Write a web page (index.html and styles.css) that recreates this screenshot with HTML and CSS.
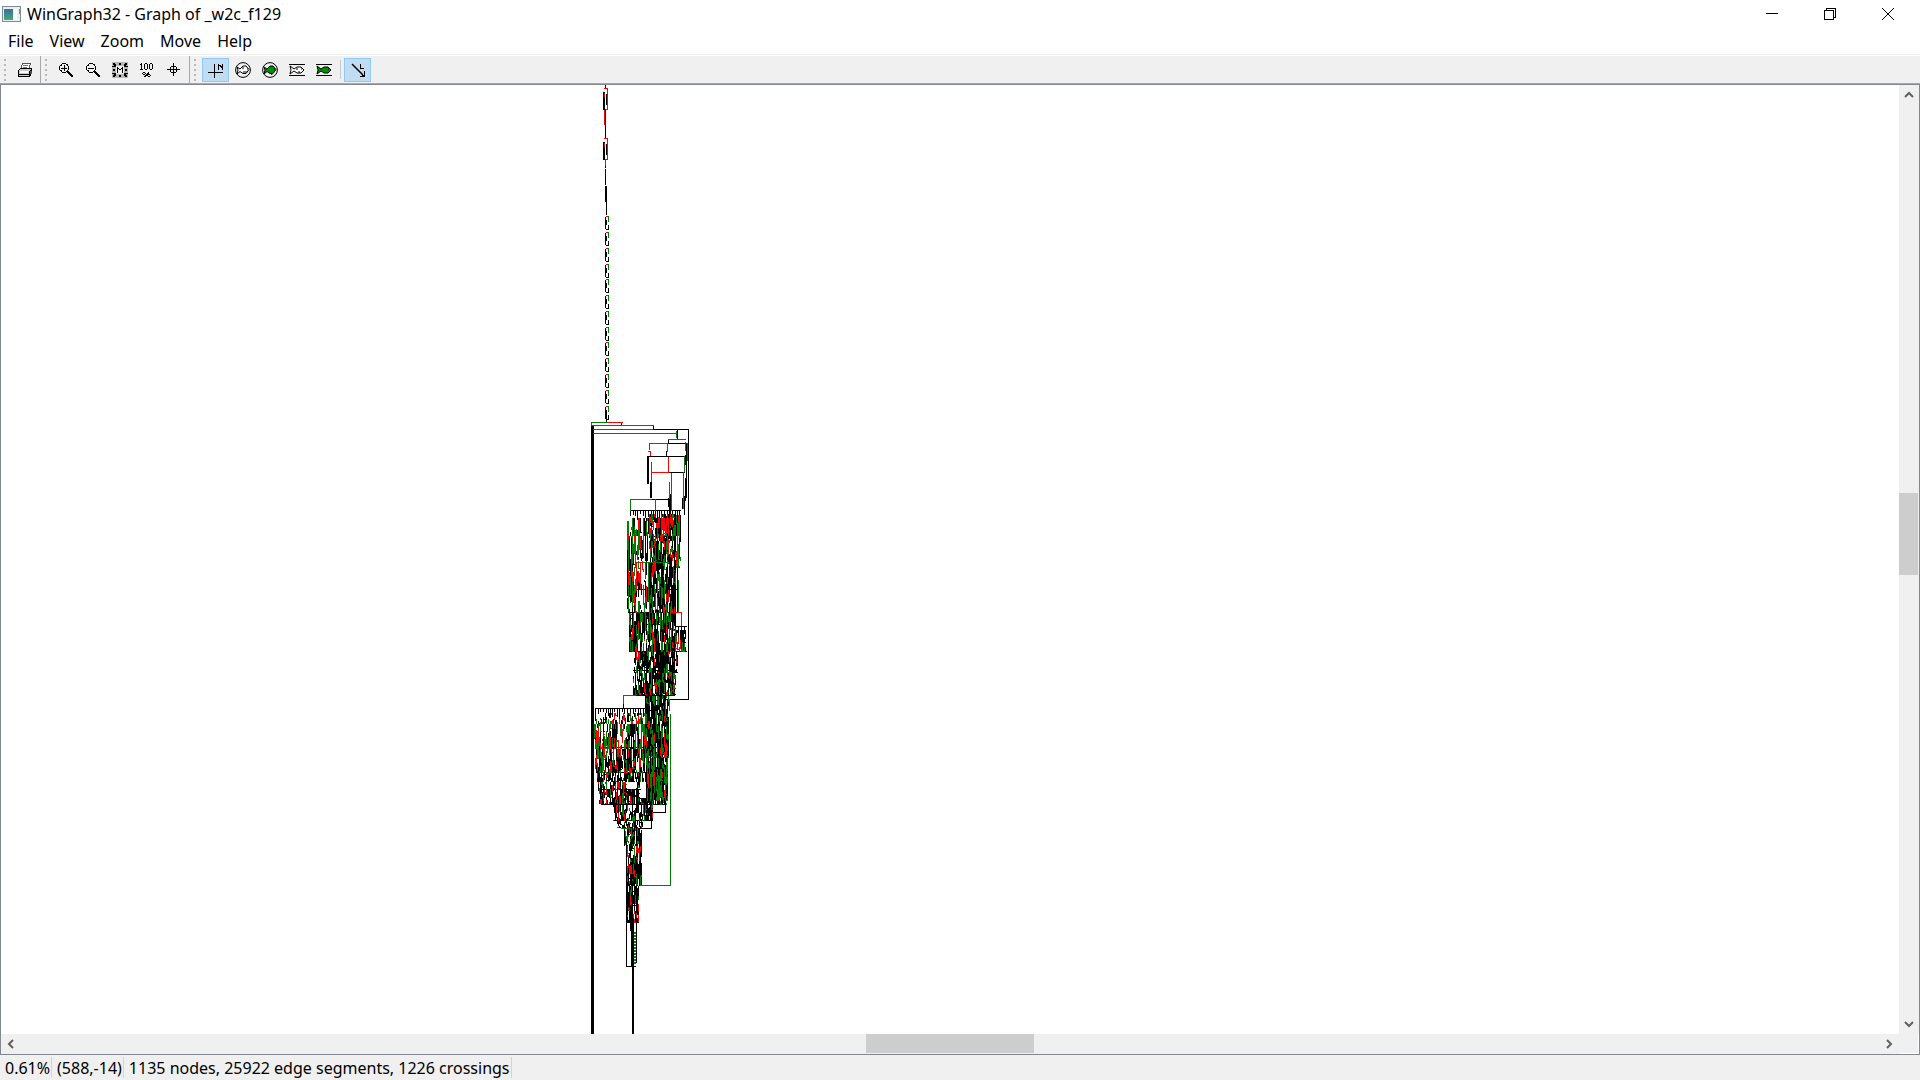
FILE: index.html
```html
<!DOCTYPE html>
<html lang="en">
<head>
<meta charset="utf-8">
<title>WinGraph32 - Graph of _w2c_f129</title>
<link rel="stylesheet" href="styles.css">
</head>
<body>
<div class="window">
  <header class="titlebar">
    <svg class="app-icon" width="19" height="16" viewBox="0 0 19 16" shape-rendering="crispEdges"><defs><linearGradient id="pane" x2="0" y2="1"><stop offset="0" stop-color="#3a6ea0"/><stop offset="1" stop-color="#48a878"/></linearGradient></defs><path fill="#7c8a92" d="M0 0h19v16H0z"/><path fill="#e9eef0" d="M1 1h17v14H1z"/><path fill="url(#pane)" d="M2 3h9v11H2z"/><path fill="#fff" d="M12 3h3v11h-3z"/><path fill="#50a090" d="M17 3h1v5h-1z"/></svg>
    <h1 class="title">WinGraph32 - Graph of _w2c_f129</h1>
    <div class="window-buttons">
      <button class="window-button" aria-label="Minimize"><svg width="12" height="12" shape-rendering="crispEdges"><path d="M0 5h12v1H0z"/></svg></button>
      <button class="window-button" aria-label="Restore"><svg width="12" height="12" fill="none" stroke="#000" shape-rendering="crispEdges"><path d="M.5 2.500h9v9h-9zM2.500 2V.5h9v9H10"/></svg></button>
      <button class="window-button" aria-label="Close"><svg width="12" height="12" stroke="#000"><path d="M0 0l12 12M12 0L0 12"/></svg></button>
    </div>
  </header>
  <nav class="menubar">
    <button class="menu">File</button><button class="menu">View</button><button class="menu">Zoom</button><button class="menu">Move</button><button class="menu">Help</button>
  </nav>
  <div class="toolbar">
    <div class="tool-group">
      <span class="grip"></span>
      <button class="tool" aria-label="Print"><svg width="16" height="16" shape-rendering="crispEdges"><path fill="#fff" stroke="#555" d="M5.500 1.500h8l-2 6h-8z"/><path stroke="#777" d="M6 3.500h5M6 5.500h4"/><path fill="#ccc" stroke="#000" d="M1.500 8.500l2-2h11v5l-2 3h-11z"/><path stroke="#000" d="M2 12.500h10M12.500 9v5M13 9.500l2-2"/><path stroke="#fff" d="M3 9.500h9M3 10.500h8"/><path fill="#555" d="M13 9h2v3h-2z"/></svg></button>
    </div>
    <div class="tool-group">
      <span class="grip"></span>
      <button class="tool" aria-label="Zoom in"><svg width="16" height="16" fill="none" stroke="#000" shape-rendering="crispEdges"><path d="M4 1.500h4M4 10.500h4M1.500 4v4M10.500 4v4M2 3.500h1v-1h1M8 2.500h1v1h1M2 8.500h1v1h1M8 9.500h1v-1h1M3 6.500h6M6.500 3v6"/><path stroke-width="2" d="M9 9l6 6"/></svg></button>
      <button class="tool" aria-label="Zoom out"><svg width="16" height="16" fill="none" stroke="#000" shape-rendering="crispEdges"><path d="M4 1.500h4M4 10.500h4M1.500 4v4M10.500 4v4M2 3.500h1v-1h1M8 2.500h1v1h1M2 8.500h1v1h1M8 9.500h1v-1h1M3 6.500h6"/><path stroke-width="2" d="M9 9l6 6"/></svg></button>
      <button class="tool" aria-label="Fit window"><svg width="16" height="16" shape-rendering="crispEdges"><path fill="#b8b8b8" d="M0 0h16v16H0z"/><path fill="#f0f0f0" d="M4 4h8v8H4z"/><path d="M4 1v4H0V4h2V3H1V1h2v1h1zM12 1v4h4V4h-2V3h1V1h-2v1h-1zM4 15v-4H0v1h2v1H1v2h2v-1h1zM12 15v-4h4v1h-2v1h1v2h-2v-1h-1zM5 5h1v1h1v1h2V6h1V5h1v6h-1V7H9v1H7V7H6v4H5zM7 1h2v2H7zM7 13h2v2H7zM1 7h2v2H1zM13 7h2v2h-2z"/></svg></button>
      <button class="tool" aria-label="Zoom 100%"><svg width="16" height="16" fill="none" stroke="#000" shape-rendering="crispEdges"><path d="M1 2.500h1M2.500 1v7M1 7.500h3M5.500 2v5M6 1.500h2M8.500 2v5M6 7.500h2M10.500 2v5M11 1.500h2M13.500 2v5M11 7.500h2M4 10.500h2M4 12.500h2M9 12.500h2M9 14.500h2M3.500 11v1M6.500 11v1M8.500 13v1M11.500 13v1M5 14.500h1v-1h1v-1h1v-1h1v-1h1"/></svg></button>
      <button class="tool" aria-label="Center"><svg width="16" height="16" fill="none" stroke="#000" shape-rendering="crispEdges"><path d="M7.500 1v13M1 7.500h13M5 4.500h5M4.500 5v5M10.500 5v5M5 10.500h5"/></svg></button>
    </div>
    <div class="tool-group">
      <span class="grip"></span>
      <button class="tool pressed" aria-label="Orthogonal layout" aria-pressed="true"><svg width="16" height="16" fill="none" stroke="#000" shape-rendering="crispEdges"><path d="M0 10.500h15M6.500 2v14M10.500 2v6M14.500 2v6M11 3.500h1v1h1v1h1v1h1"/></svg></button>
      <button class="tool" aria-label="Circular fisheye"><svg width="16" height="16" fill="none" stroke="#000"><circle cx="8" cy="8" r="7.400"/><path fill="#fff" d="M2 5l3 2 3-3h3l3 3.500-3 4H8L5 9.500 2 12l1-4z"/><path d="M12 7h1M7 6h2M8 10h2M11 9v2"/></svg></button>
      <button class="tool" aria-label="Filled circular fisheye"><svg width="16" height="16" fill="none" stroke="#000"><circle cx="8" cy="8" r="7.400"/><path fill="#009000" d="M2 5l3 2 3-3h3l3 3.500-3 4H8L5 9.500 2 12l1-4z"/><path d="M12 7h1M9 11l1 2"/></svg></button>
      <button class="tool" aria-label="Flat fisheye"><svg width="16" height="16" fill="none" stroke="#000"><path shape-rendering="crispEdges" d="M0 2.500h16M0 13.500h16"/><path fill="#fff" d="M1 4l4 3 3-2h4l3 3-3 3H8L5 9l-4 3 1-4z"/><path d="M12 7h1M7 7h2M9 10h2"/></svg></button>
      <button class="tool" aria-label="Filled flat fisheye"><svg width="16" height="16" fill="none" stroke="#000"><path shape-rendering="crispEdges" d="M0 2.500h16M0 13.500h16"/><path fill="#009000" d="M1 4l4 3 3-2h4l3 3-3 3H8L5 9l-4 3 1-4z"/><path d="M12 7h1"/></svg></button>
      <span class="divider"></span>
      <button class="tool pressed" aria-label="Edge direction" aria-pressed="true"><svg width="16" height="16" fill="none" stroke="#000"><path stroke-width="1.500" d="M2 2l11 11"/><path shape-rendering="crispEdges" d="M14.500 9v5M10 14.500h5M12 13.500h3M10.500 2v5M11 6.500h3"/></svg></button>
    </div>
  </div>
  <main class="view">
    <div class="graph">
      <svg class="drawing" shape-rendering="crispEdges" role="img" aria-label="Control flow graph">
        <g transform="translate(-1 -85)">
          <path id="black" fill="#000"/><path id="green" fill="#008000"/><path id="red" fill="#f00"/>
        </g>
      </svg>
    </div>
    <div class="scroll vertical">
      <button class="arrow" aria-label="Scroll up"><svg width="10" height="8"><path d="M1 6l4-4 4 4"/></svg></button>
      <div class="track"><span class="before"></span><span class="thumb"></span><span class="after"></span></div>
      <button class="arrow" aria-label="Scroll down"><svg width="10" height="8"><path d="M1 2l4 4 4-4"/></svg></button>
    </div>
    <div class="scroll horizontal">
      <button class="arrow" aria-label="Scroll left"><svg width="8" height="10"><path d="M6 1L2 5l4 4"/></svg></button>
      <div class="track"><span class="before"></span><span class="thumb"></span><span class="after"></span></div>
      <button class="arrow" aria-label="Scroll right"><svg width="8" height="10"><path d="M2 1l4 4-4 4"/></svg></button>
    </div>
    <span class="corner"></span>
  </main>
  <footer class="status">
    <span class="cell">0.61%</span><span class="cell">(588,-14)</span><span class="cell">1135 nodes, 25922 edge segments, 1226 crossings</span>
  </footer>
</div>
<script src="graph.js"></script>
</body>
</html>
```
FILE: styles.css
```css
* { box-sizing: border-box; }
body { margin: 0; font: 16px/20px "Noto Sans", "Open Sans", sans-serif; color: #000; background: #fff; }
button { border: 0; padding: 0; margin: 0; background: none; font: inherit; color: inherit; }
svg { display: block; }
.window { display: flex; flex-direction: column; height: 100vh; overflow: hidden; }

.titlebar { display: flex; align-items: center; height: 28px; padding: 0 3px 0 2px; }
.title { flex: 1; margin: 0 0 0 6px; font-size: 16px; font-weight: 400; line-height: 20px; }
.window-buttons { display: flex; }
.window-button { display: flex; align-items: center; justify-content: center; width: 58px; height: 28px; }

.menubar { display: flex; height: 27px; border-bottom: 1px solid #f0f0f0; }
.menu { padding: 0 8px; line-height: 26px; }

.toolbar { display: flex; height: 28px; margin-top: 1px; background: #f0f0f0; border-bottom: 1px solid #a8a8ac; }
.tool-group { display: flex; align-items: center; padding-left: 4px; }
.tool-group + .tool-group { border-left: 1px solid #a8a8a8; }
.grip { width: 2px; height: 22px; margin-right: 5px; background: repeating-linear-gradient(#b8b8b8 0 2px, transparent 2px 5px); }
.tool { display: flex; align-items: center; justify-content: center; width: 27px; height: 24px; }
.tool-group:not(:last-child) .tool:last-child { margin-right: 2px; }
.tool-group:last-child .grip { margin-right: 6px; }
.pressed { background: #c0dcf3; border: 1px solid #90c8f6; }
.divider { width: 1px; height: 19px; margin: 0 3px; background: #c8c8c8; }

.view { position: relative; flex: 1; min-height: 0; display: grid; grid-template: 1fr 20px / 1fr 20px; border: 1px solid #828790; }
.graph { overflow: hidden; min-height: 0; }
.drawing { width: 100%; height: 100%; }
.scroll { display: flex; background: #f0f0f0; }
.vertical { flex-direction: column; padding-right: 1px; }
.horizontal { grid-column: 1; padding-bottom: 1px; }
.arrow { display: flex; align-items: center; justify-content: center; flex: 0 0 20px; }
.arrow path { fill: none; stroke: #606060; stroke-width: 2; }
.track { display: flex; flex: 1; flex-direction: inherit; }
.thumb { background: #cdcdcd; }
.vertical .before { flex: 388; }
.vertical .thumb { flex: 82; }
.vertical .after { flex: 439; }
.horizontal .before { flex: 845; }
.horizontal .thumb { flex: 168; }
.horizontal .after { flex: 845; }
.corner { background: #f0f0f0; border: solid #fff; border-width: 0 1px 1px 0; }

.status { display: flex; height: 25px; padding: 2px 0; background: #f0f0f0; line-height: 22px; }
.cell { padding: 0 1px 0 5px; border-right: 1px solid #d4d4d4; white-space: nowrap; }
```
FILE: graph.js
```js
const out = { k: '', g: '', r: '' };
const box = (c, x, y, w, h) => { out[c] += `M${x} ${y}h${w}v${h}h${-w}z`; };
const hl = (c, x0, x1, y) => box(c, x0, y, x1 - x0 + 1, 1);
const vl = (c, x, y0, y1) => box(c, x, y0, 1, y1 - y0 + 1);

let seed = 129;
const rnd = () => { seed = (seed * 1664525 + 1013904223) % 4294967296; return seed / 4294967296; };

// Columns of short edge segments; mix gives the share of black, green and red.
function band(x0, x1, y0, y1, mix, len = 12) {
  for (let x = x0; x <= x1; x++) {
    let y = y0;
    while (y <= y1) {
      const n = 2 + Math.floor(rnd() * len);
      const end = Math.min(y + n - 1, y1);
      const p = rnd();
      const c = p < mix[0] ? 'k' : p < mix[0] + mix[1] ? 'g' : p < mix[0] + mix[1] + mix[2] ? 'r' : '';
      if (c) {
        vl(c, x, y, end);
        if (rnd() < 0.25 && x < x1) hl(c, x, x + 1, end);
      }
      y = end + 1;
    }
  }
}

// A bus with teeth hanging under it.
function comb(x0, x1, y, depth) {
  hl('k', x0, x1, y);
  for (let x = x0; x <= x1; x += 2 + Math.floor(rnd() * 2)) vl('k', x, y, y + 3 + Math.floor(rnd() * depth));
}

// Upper chain
vl('k', 605, 85, 87);
for (const y of [88, 138]) {
  hl('g', 605, 607, y); vl('g', 607, y, y + 21); hl('g', 605, 607, y + 21);
  hl('r', 604, 606, y); box('k', 603, y + 4, 2, 18); vl('r', 604, y + 5, y + 8); vl('k', 606, y + 6, y + 16);
}
vl('r', 604, 110, 124); vl('k', 605, 110, 138);
vl('k', 605, 160, 167); vl('r', 605, 160, 165);
vl('k', 605, 169, 184); box('k', 605, 186, 2, 16); vl('k', 606, 200, 214);
for (const y of [216, 232, 248, 264, 279, 295, 311, 327, 342, 358, 374, 390, 406]) {
  vl('k', 605, y + 1, y + 12); hl('k', 606, 607, y + 13); vl('k', 608, y + 9, y + 13); vl('k', 606, y + 4, y + 8);
  hl('g', 607, 608, y); vl('g', 608, y, y + 5); hl('r', 606, 607, y);
}
vl('k', 606, 414, 422);

// Outer frame
hl('g', 591, 606, 422); hl('r', 607, 622, 422); vl('g', 591, 422, 425);
vl('k', 621, 423, 425); hl('g', 592, 622, 425); hl('r', 623, 653, 425); vl('k', 653, 425, 429);
hl('r', 593, 652, 429); hl('k', 653, 688, 429); hl('r', 593, 676, 433);
box('k', 591, 426, 3, 608); vl('k', 688, 429, 699); hl('k', 666, 688, 699);

// Branches on the upper right
vl('k', 677, 430, 438); vl('g', 676, 431, 437); hl('r', 668, 677, 439); hl('g', 678, 685, 439); vl('k', 668, 439, 443);
hl('g', 649, 667, 443); hl('k', 668, 687, 443); vl('g', 649, 443, 449); vl('r', 667, 443, 451); vl('k', 666, 451, 456);
hl('r', 648, 650, 451); vl('r', 650, 451, 455); hl('k', 649, 684, 456); vl('r', 668, 457, 471); vl('g', 684, 456, 471);
box('k', 647, 456, 2, 28); vl('g', 651, 462, 473); vl('r', 651, 472, 481); box('k', 650, 482, 2, 16);
hl('r', 652, 668, 472); hl('k', 669, 684, 472); vl('g', 671, 473, 510); vl('r', 669, 482, 498);
vl('k', 686, 443, 497); box('k', 685, 455, 2, 10); vl('r', 685, 442, 450); vl('r', 683, 472, 508); vl('g', 687, 443, 460);
vl('k', 682, 498, 508); vl('k', 684, 496, 514); vl('k', 685, 478, 500);
hl('g', 630, 651, 499); hl('k', 652, 670, 499); vl('g', 630, 499, 510); vl('r', 655, 499, 510); vl('k', 668, 498, 506); box('k', 669, 494, 2, 26);

// First cluster
comb(630, 680, 510, 7);
band(630, 679, 518, 535, [.16, .2, .12], 16);
band(649, 675, 514, 540, [.5, .16, .08], 8);
for (const [x, c, y0, y1] of [[629, 'k', 536, 570], [632, 'g', 520, 552], [635, 'g', 530, 562], [638, 'g', 519, 554], [643, 'g', 519, 555], [642, 'k', 540, 558], [647, 'k', 532, 558], [628, 'g', 521, 611], [631, 'r', 554, 576], [636, 'r', 562, 590], [640, 'r', 562, 588], [645, 'r', 562, 578], [643, 'r', 585, 604], [648, 'g', 562, 600]]) vl(c, x, y0, y1);
band(629, 635, 536, 612, [.34, .18, .14], 14);
band(636, 648, 536, 560, [.22, .12, .06], 16);
band(627, 628, 521, 612, [.4, .24, .14], 16);
band(636, 648, 561, 612, [.16, .08, .08], 14);
band(649, 675, 541, 612, [.52, .18, .13], 12);
band(676, 680, 515, 567, [.3, .18, .25], 15);
hl('k', 649, 675, 536); hl('g', 636, 668, 562); hl('k', 646, 676, 589); hl('k', 627, 648, 589);
vl('k', 677, 568, 612); vl('g', 678, 580, 612); hl('r', 675, 681, 612); vl('r', 681, 612, 625);
band(629, 675, 613, 651, [.52, .24, .09], 12);
hl('k', 629, 648, 612);
comb(675, 686, 626, 7);
band(675, 685, 630, 651, [.5, .15, .08], 8);
box('k', 629, 622, 2, 30); hl('k', 629, 686, 651);
band(634, 677, 652, 672, [.6, .17, .07], 8);
band(633, 675, 673, 694, [.52, .2, .1], 8);
hl('k', 633, 676, 670); hl('k', 634, 674, 695);
box('k', 658, 650, 8, 44);

// Link to the second cluster
hl('r', 623, 635, 695); vl('r', 623, 695, 703); vl('k', 623, 704, 708);
vl('k', 645, 695, 708); box('k', 646, 700, 4, 10);
band(645, 668, 696, 757, [.62, .22, .07], 10);
vl('g', 670, 714, 885); hl('g', 640, 670, 885); vl('r', 669, 699, 710);

// Second cluster
comb(595, 645, 708, 7);
band(595, 645, 713, 723, [.2, .18, .1], 6);
band(594, 646, 724, 748, [.3, .25, .18], 15);
band(595, 646, 749, 772, [.46, .15, .2], 11);
band(646, 667, 758, 800, [.58, .26, .04], 14);
hl('k', 596, 650, 747); hl('k', 597, 660, 772);
band(597, 649, 773, 781, [.6, .12, .06], 5);
band(598, 626, 782, 803, [.45, .14, .12], 7);
band(636, 639, 782, 788, [.5, .1, .1], 5);
band(621, 639, 789, 803, [.72, .05, .03], 9);
band(650, 666, 772, 804, [.6, .16, .06], 8);
band(640, 649, 799, 803, [.6, .1, .05], 4);
hl('k', 601, 665, 804); hl('k', 599, 640, 789); hl('k', 639, 651, 798);
vl('k', 665, 804, 812); hl('k', 653, 665, 812);
band(613, 652, 805, 820, [.45, .1, .08], 7);
hl('k', 613, 651, 820); vl('k', 651, 812, 828); hl('k', 640, 651, 828); hl('g', 621, 630, 828);
band(617, 642, 820, 827, [.5, .06, .05], 5);

// Tail
band(624, 641, 828, 845, [.5, .15, .09], 8);
band(627, 641, 846, 885, [.62, .15, .08], 10);
band(627, 638, 886, 922, [.6, .12, .1], 9);
box('k', 630, 858, 6, 26);
vl('k', 626, 841, 966); hl('k', 626, 635, 966); vl('g', 640, 876, 885);
hl('k', 627, 638, 905); hl('k', 627, 638, 920);
box('k', 631, 920, 3, 47); vl('k', 636, 922, 962); vl('k', 630, 920, 930);
for (let y = 932; y < 965; y += 3) box('g', 634, y, 2, 2);
box('k', 632, 966, 2, 68);

document.getElementById('black').setAttribute('d', out.k);
document.getElementById('green').setAttribute('d', out.g);
document.getElementById('red').setAttribute('d', out.r);
```
